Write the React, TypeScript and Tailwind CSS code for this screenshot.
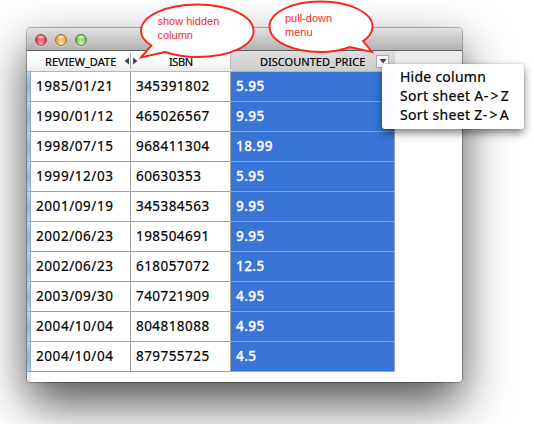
const rows: [string, string, string][] = [
  ['1985/01/21', '345391802', '5.95'],
  ['1990/01/12', '465026567', '9.95'],
  ['1998/07/15', '968411304', '18.99'],
  ['1999/12/03', '60630353', '5.95'],
  ['2001/09/19', '345384563', '9.95'],
  ['2002/06/23', '198504691', '9.95'],
  ['2002/06/23', '618057072', '12.5'],
  ['2003/09/30', '740721909', '4.95'],
  ['2004/10/04', '804818088', '4.95'],
  ['2004/10/04', '879755725', '4.5'],
];

function TitleBar() {
  const light = 'h-3 w-3 rounded-full border shadow-[0_1px_0_rgba(255,255,255,0.5)]';
  return (
    <div className="flex h-[23px] items-center gap-2 border-b border-[#5c5c5c] bg-linear-to-b from-[#e2e2e2] to-[#b1b1b1] pl-2 pt-0.5">
      <span className={`${light} border-[#8f4a4c] bg-[radial-gradient(ellipse_50%_22%_at_50%_20%,rgba(255,255,255,0.8),transparent),radial-gradient(ellipse_at_50%_90%,#ffb9b4_0%,#ee5058_50%,#c0303a_100%)]`} />
      <span className={`${light} border-[#96703c] bg-[radial-gradient(ellipse_50%_22%_at_50%_20%,rgba(255,255,255,0.8),transparent),radial-gradient(ellipse_at_50%_90%,#fff3a8_0%,#f3b954_50%,#c9862f_100%)]`} />
      <span className={`${light} border-[#55803f] bg-[radial-gradient(ellipse_50%_22%_at_50%_20%,rgba(255,255,255,0.8),transparent),radial-gradient(ellipse_at_50%_90%,#dcffb8_0%,#8fce72_50%,#5ba044_100%)]`} />
    </div>
  );
}

function HeaderRow() {
  return (
    <div className="flex h-[21px] border-b border-[#b5b5b5] bg-linear-to-b from-white from-45% to-[#e9e9e9] text-[11px] leading-[21px] [-webkit-text-stroke:0.2px_black]">
      <div className="flex w-[104px] items-center pl-[18px]">
        <span className="w-[73px] whitespace-nowrap tracking-[0.05px]">REVIEW_DATE</span>
        <svg className="ml-[5.5px]" width="5" height="8" viewBox="0 0 5 8"><path d="M5 0.5V7.5L0.5 4Z" fill="#444" /></svg>
        <span className="ml-auto h-4 w-px bg-[#aaa]" />
      </div>
      <div className="flex w-[100px] items-center pl-[2px]">
        <svg width="5" height="8" viewBox="0 0 5 8"><path d="M0 0.5V7.5L4.5 4Z" fill="#444" /></svg>
        <span className="ml-[31px] tracking-[-0.4px]">ISBN</span>
        <span className="ml-auto h-4 w-px bg-[#bbb]" />
      </div>
      <div className="flex w-[164px] items-center bg-linear-to-b from-[#dedede] to-[#cdcdcd] pl-[29px]">
        <span className="w-[106px] whitespace-nowrap tracking-[0.02px]">DISCOUNTED_PRICE</span>
        <span className="ml-[10px] flex h-[13px] w-[13px] items-center justify-center border border-[#aaa] bg-[#f8f8f8]">
          <svg width="8" height="5" viewBox="0 0 8 5"><path d="M0.5 0H7.5L4 4.5Z" fill="#444" /></svg>
        </span>
      </div>
      <div className="flex-1 bg-[#ececec]" />
    </div>
  );
}

function Sheet() {
  return (
    <div className="w-[368px] text-[13.5px] leading-[28px] tracking-[0.45px] [-webkit-text-stroke:0.2px_black]">
      {rows.map(([date, isbn, price], i) => (
        <div key={i} className="flex h-[30px]">
          <div className="w-1 border-b border-r border-[#9badc2] bg-linear-to-b from-[#b9d4f2] via-[#86b8eb] to-[#a8cef4]" />
          <div className="w-[100px] border-b border-r border-[#a0a0a4] pl-[5px] tracking-[0.57px]">{date}</div>
          <div className="w-[100px] border-b border-r border-[#a0a0a4] pl-[5px]">{isbn}</div>
          <div className="w-[164px] border-b border-r border-[#9ba0b3] bg-[#3875d7] pl-[5px] font-medium text-white [-webkit-text-stroke:0.3px_white]">{price}</div>
        </div>
      ))}
    </div>
  );
}

function Callouts() {
  return (
    <div className="absolute inset-0 font-['Liberation_Sans',Arial,sans-serif] text-[11px] leading-[14px] text-[#f52a1c]">
      <svg className="absolute inset-0" width="534" height="90" viewBox="0 0 534 90" fill="white" stroke="#fb251b" strokeWidth="1.9">
        <path d="M151.5 45.5C144 41 141 36 141 31C141 16 166 4.5 197 4.5C229 4.5 253.500 16 253.500 31C253.500 46 229 57 197 57C185 57 174 55 165 52L141 57.500Z" />
        <path d="M363 41C369.500 37 372.500 32 372.500 26.500C372.500 12.500 349 1.500 320.500 1.500C292 1.500 269.500 12.500 269.500 26.500C269.500 41 292 52 320.500 52C331 52 342 50 350 47L372 52Z" />
      </svg>
      <div className="absolute left-[157.5px] top-[14px] whitespace-nowrap">show hidden<br />column</div>
      <div className="absolute left-[285px] top-[11px] whitespace-nowrap">pull-down<br />menu</div>
    </div>
  );
}

function Menu() {
  return (
    <div className="absolute left-[382px] top-[64px] h-[65px] w-[142px] whitespace-nowrap rounded-[3px] bg-white/98 pl-[18px] pt-[3px] text-[14px] leading-[19px] shadow-[0_4px_9px_rgba(0,0,0,0.5),0_0_1px_rgba(0,0,0,0.6)] [-webkit-text-stroke:0.2px_black]">
      <div className="tracking-[0.25px]">Hide column</div>
      <div className="tracking-[0.35px]">Sort sheet A<span className="tracking-[2.3px]">-</span>&gt;<span className="ml-0.5">Z</span></div>
      <div className="tracking-[0.35px]">Sort sheet Z<span className="tracking-[2.3px]">-</span>&gt;<span className="ml-0.5">A</span></div>
    </div>
  );
}

export default function App() {
  return (
    <div className="relative h-[424px] w-[534px] overflow-hidden bg-white pl-[27px] pt-[28px] font-['Noto_Sans','Lucida_Grande',sans-serif] text-black">
      <div className="h-[354px] w-[435px] rounded-[4px] shadow-[0_21px_48px_rgba(0,0,0,0.69),0_0_1px_1px_rgba(0,0,0,0.3)]">
        <div className="h-full overflow-hidden rounded-[4px] bg-white">
          <TitleBar />
          <HeaderRow />
          <Sheet />
          <div className="h-2.5 w-1 bg-[#e8e8e8]" />
        </div>
      </div>
      <Callouts />
      <Menu />
    </div>
  );
}
